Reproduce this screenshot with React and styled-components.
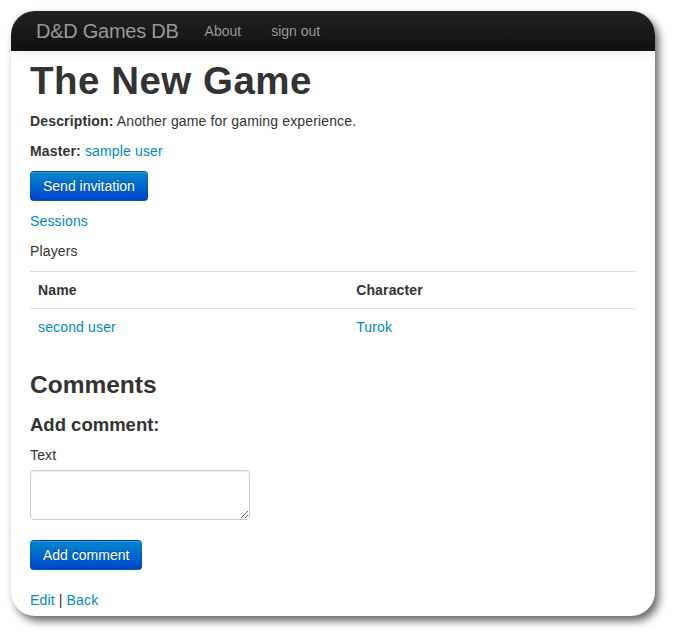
import React from 'react';
import styled, { createGlobalStyle } from 'styled-components';

const GlobalStyle = createGlobalStyle`
  html, body {
    margin: 0;
    padding: 0;
    background: #ffffff;
  }
  body {
    font-family: "Liberation Sans", Arial, Helvetica, sans-serif;
    font-size: 14px;
    line-height: 20px;
    letter-spacing: 0.15px;
    color: #333333;
  }
`;

const Page = styled.div`
  padding: 11px 19px 20px 11px;
`;

const Window = styled.div`
  width: 644px;
  height: 605px;
  background: #ffffff;
  border-radius: 24px;
  overflow: hidden;
  box-shadow: 4px 5px 9px rgba(0, 0, 0, 0.6);
`;

const Navbar = styled.div`
  height: 40px;
  display: flex;
  align-items: center;
  padding-left: 25px;
  background-image: linear-gradient(to bottom, #222222, #111111);
  box-shadow: 0 1px 10px rgba(0, 0, 0, 0.1);
  position: relative;
`;

const Brand = styled.a`
  font-size: 20px;
  letter-spacing: -0.25px;
  color: #999999;
  padding-right: 11px;
  text-decoration: none;
`;

const NavLink = styled.a`
  font-size: 14px;
  letter-spacing: 0;
  color: #999999;
  padding: 0 15px;
  text-decoration: none;
`;

const Content = styled.div`
  padding: 0 19px;
`;

const Title = styled.h1`
  font-size: 38.5px;
  letter-spacing: 0.5px;
  line-height: 40px;
  font-weight: bold;
  margin: 10px 0;
  color: #333333;
`;

const Para = styled.p`
  margin: 0 0 10px;
`;

const Link = styled.a`
  color: #0088cc;
  text-decoration: none;
`;

const Button = styled.button`
  display: inline-block;
  font-family: inherit;
  font-size: 14px;
  line-height: 20px;
  letter-spacing: 0;
  padding: 4px 12px;
  color: #ffffff;
  text-shadow: 0 -1px 0 rgba(0, 0, 0, 0.25);
  background-image: linear-gradient(to bottom, #0088cc, #0044cc);
  border: 1px solid;
  border-color: rgba(0, 0, 0, 0.1) rgba(0, 0, 0, 0.1) rgba(0, 0, 0, 0.25);
  border-radius: 4px;
  box-shadow: inset 0 1px 0 rgba(255, 255, 255, 0.2), 0 1px 2px rgba(0, 0, 0, 0.05);
  cursor: pointer;
`;

const ButtonRow = styled.div`
  margin-bottom: ${props => props.gap}px;
`;

const Table = styled.table`
  width: 100%;
  border-collapse: collapse;
  border-spacing: 0;
  margin-bottom: 20px;
`;

const Th = styled.th`
  text-align: left;
  font-weight: bold;
  padding: 8px;
  line-height: 20px;
  border-top: 1px solid #dddddd;
  width: ${props => props.w || 'auto'};
`;

const Td = styled.td`
  padding: 8px;
  line-height: 20px;
  border-top: 1px solid #dddddd;
`;

const SectionTitle = styled.h3`
  font-size: 24.5px;
  letter-spacing: 0;
  line-height: 40px;
  font-weight: bold;
  margin: 0 0 10px;
`;

const SubTitle = styled.h4`
  font-size: 18.5px;
  letter-spacing: 0;
  line-height: 20px;
  font-weight: bold;
  margin: 0 0 10px;
`;

const Label = styled.label`
  display: block;
  margin-bottom: 5px;
`;

const TextArea = styled.textarea`
  display: block;
  box-sizing: border-box;
  width: 220px;
  height: 50px;
  padding: 4px 6px;
  font-family: inherit;
  font-size: 14px;
  border: 1px solid #cccccc;
  border-radius: 4px;
  box-shadow: inset 0 1px 1px rgba(0, 0, 0, 0.075);
  margin: 0 0 20px;
`;

const Footer = styled.p`
  margin: 20px 0 0;
`;

export default function App() {
  return (
    <>
      <GlobalStyle />
      <Page>
        <Window>
          <Navbar>
            <Brand href="#">D&amp;D Games DB</Brand>
            <NavLink href="#">About</NavLink>
            <NavLink href="#">sign out</NavLink>
          </Navbar>
          <Content>
            <Title>The New Game</Title>
            <Para>
              <b>Description:</b> Another game for gaming experience.
            </Para>
            <Para>
              <b>Master:</b> <Link href="#">sample user</Link>
            </Para>
            <ButtonRow gap={10}>
              <Button>Send invitation</Button>
            </ButtonRow>
            <Para>
              <Link href="#">Sessions</Link>
            </Para>
            <Para>Players</Para>
            <Table>
              <thead>
                <tr>
                  <Th w="52.5%">Name</Th>
                  <Th>Character</Th>
                </tr>
              </thead>
              <tbody>
                <tr>
                  <Td><Link href="#">second user</Link></Td>
                  <Td><Link href="#">Turok</Link></Td>
                </tr>
              </tbody>
            </Table>
            <SectionTitle>Comments</SectionTitle>
            <SubTitle>Add comment:</SubTitle>
            <Label>Text</Label>
            <TextArea />
            <ButtonRow gap={0}>
              <Button>Add comment</Button>
            </ButtonRow>
            <Footer>
              <Link href="#">Edit</Link> | <Link href="#">Back</Link>
            </Footer>
          </Content>
        </Window>
      </Page>
    </>
  );
}
